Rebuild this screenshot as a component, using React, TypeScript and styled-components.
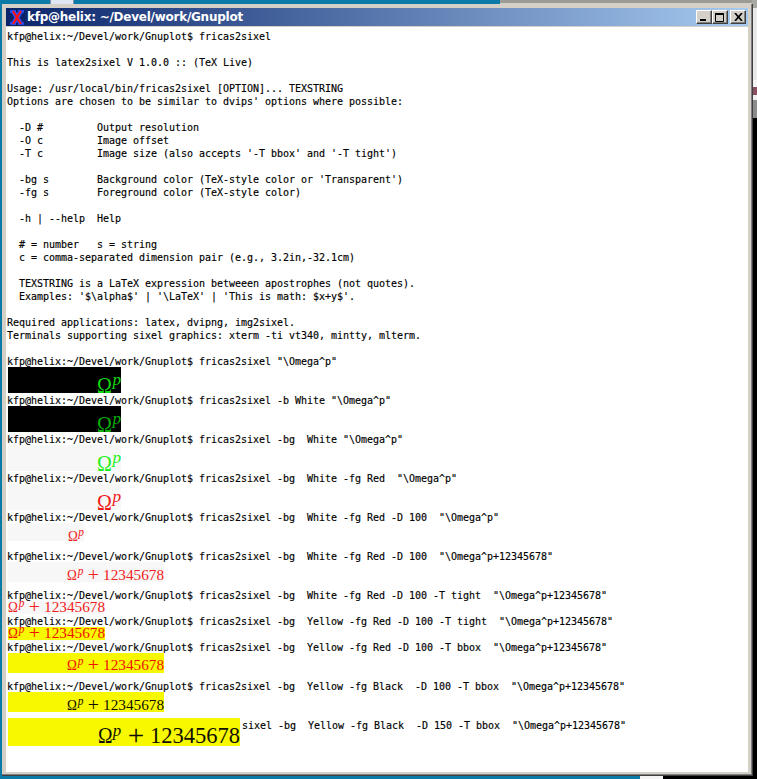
import React from "react";
import styled, { createGlobalStyle } from "styled-components";

const Global = createGlobalStyle`
  html, body { margin: 0; padding: 0; background: #0a7aa6; }
  #root { width: 757px; height: 779px; overflow: hidden; }
`;

const Desktop = styled.div`
  position: relative;
  width: 757px;
  height: 779px;
  overflow: hidden;
  background: #0a7aa6;
`;

const BehindTop = styled.div`
  position: absolute;
  left: 500px;
  top: 0;
  width: 257px;
  height: 8px;
  background: linear-gradient(#9c9c96 0 3px, #d4d0c8 3px);
`;

const ToolbarBit = styled.div`
  position: absolute;
  left: 50px;
  top: 0;
  width: 22px;
  height: 4px;
  background: #dfe6f2;
  border-left: 1px solid #8a94a8;
  border-right: 1px solid #8a94a8;
`;

const BehindRight = styled.div`
  position: absolute;
  left: 752px;
  top: 0;
  width: 5px;
  height: 779px;
  background: linear-gradient(
    #a8a8a2 0 8px,
    #e8e8e8 8px 80px,
    #f4f4f4 80px 87px,
    #8a5060 87px 95px,
    #f0f0f0 95px 100px,
    #8c8c8c 100px 118px,
    #000 118px
  );
`;

const BehindBottom = styled.div`
  position: absolute;
  left: 640px;
  top: 776px;
  width: 117px;
  height: 3px;
  background: linear-gradient(90deg, #f4f4f4 0 23px, #000 23px);
`;

const TermWindow = styled.div`
  position: absolute;
  left: 2px;
  top: 4px;
  width: 751px;
  height: 772px;
  box-sizing: border-box;
  padding: 4px 4px 3px 4px;
  display: flex;
  flex-direction: column;
  background: #d4d0c8;
  border-right: 1px solid #404040;
  border-bottom: 1px solid #404040;
  box-shadow: inset -1px -1px 0 #808080;
`;

const TitleBar = styled.div`
  flex: none;
  height: 18px;
  display: flex;
  align-items: center;
  padding: 0 2px 0 3px;
  gap: 2px;
  background: linear-gradient(90deg, #0a246a, #a6caf0);
`;

const TitleText = styled.span`
  flex: 1;
  color: #fff;
  font: bold 12px/16px "DejaVu Sans", sans-serif;
  letter-spacing: -0.25px;
  white-space: pre;
`;

const Controls = styled.div`
  display: flex;
  align-items: center;
`;

const WinButton = styled.div<{ $gap?: number }>`
  width: 16px;
  height: 14px;
  box-sizing: border-box;
  margin-left: ${(p) => p.$gap ?? 0}px;
  background: #d4d0c8;
  border-top: 1px solid #fff;
  border-left: 1px solid #fff;
  border-right: 1px solid #404040;
  border-bottom: 1px solid #404040;
  box-shadow: inset -1px -1px 0 #808080;
  display: flex;
  align-items: center;
  justify-content: center;
`;

const Screen = styled.div`
  flex: 1;
  margin-top: 1px;
  padding: 2px 0 0 1px;
  background: #fff;
  color: #000;
  font: 10px/15px "DejaVu Sans Mono", monospace;
  letter-spacing: -0.02px;
  -webkit-text-stroke: 0.15px #000;
  overflow: hidden;
`;

const Row = styled.div`
  height: 13px;
  white-space: pre;
`;

const Sixel = styled.div<{ $w: number; $h: number; $bg: string; $fg: string; $size: number; $after?: number }>`
  flex: none;
  width: ${(p) => p.$w}px;
  height: ${(p) => p.$h}px;
  margin: 0 0 ${(p) => p.$after ?? 0}px 1px;
  display: flex;
  justify-content: flex-end;
  align-items: flex-end;
  background: ${(p) => p.$bg};
  color: ${(p) => p.$fg};
  -webkit-text-stroke: 0;
  font-family: "Liberation Serif", serif;
  font-size: ${(p) => p.$size}px;
  line-height: 1;
  letter-spacing: 0;
  white-space: pre;
`;

const LastRow = styled.div`
  display: flex;
  white-space: pre;
`;

const LastText = styled.span`
  margin-left: 2px;
  line-height: 15px;
  height: 13px;
`;

const Formula = styled.span<{ $lift: number }>`
  margin-bottom: calc(${(p) => p.$lift}px - 0.16em);
`;

const Omega = styled.span`
  display: inline-block;
  transform: scaleX(0.87);
  transform-origin: left bottom;
  margin-right: -0.09em;
`;

const Sup = styled.i`
  font-size: 0.75em;
  position: relative;
  top: -0.45em;
  margin-left: 0.03em;
`;

const Plus = styled.span`
  font-size: 1.3em;
  line-height: 0;
  margin: 0 0.2em 0 0.22em;
  position: relative;
  top: 0.06em;
`;

const Math: React.FC<{ plus?: boolean; lift: number }> = ({ plus, lift }) => (
  <Formula $lift={lift}>
    <Omega>Ω</Omega>
    <Sup>p</Sup>
    {plus && (
      <>
        <Plus>+</Plus>12345678
      </>
    )}
  </Formula>
);

const XIcon = () => (
  <svg width="16" height="15" viewBox="0 0 16 15">
    <rect width="16" height="15" fill="#0a246a" />
    <path d="M1 1.5h6M9 1.5h6M1 13.5h6M9 13.5h6" stroke="#2a50ff" strokeWidth="2.4" />
    <path d="M4 1l8 13M12 1L4 14" stroke="#2a50ff" strokeWidth="4.4" />
    <path d="M4 1l8 13M12 1L4 14" stroke="#ff1010" strokeWidth="2.2" />
  </svg>
);

const P = "kfp@helix:~/Devel/work/Gnuplot$ fricas2sixel";

const head = [
  P,
  "",
  "This is latex2sixel V 1.0.0 :: (TeX Live)",
  "",
  "Usage: /usr/local/bin/fricas2sixel [OPTION]... TEXSTRING",
  "Options are chosen to be similar to dvips' options where possible:",
  "",
  "  -D #         Output resolution",
  "  -O c         Image offset",
  "  -T c         Image size (also accepts '-T bbox' and '-T tight')",
  "",
  "  -bg s        Background color (TeX-style color or 'Transparent')",
  "  -fg s        Foreground color (TeX-style color)",
  "",
  "  -h | --help  Help",
  "",
  "  # = number   s = string",
  "  c = comma-separated dimension pair (e.g., 3.2in,-32.1cm)",
  "",
  "  TEXSTRING is a LaTeX expression betweeen apostrophes (not quotes).",
  "  Examples: '$\\alpha$' | '\\LaTeX' | 'This is math: $x+y$'.",
  "",
  "Required applications: latex, dvipng, img2sixel.",
  "Terminals supporting sixel graphics: xterm -ti vt340, mintty, mlterm.",
  "",
];

const runs: { cmd: string; w: number; h: number; bg: string; fg: string; size: number; lift: number; plus?: boolean; after?: number }[] = [
  { cmd: ' "\\Omega^p"', w: 113, h: 26, bg: "#000", fg: "#10d810", size: 23, lift: 0 },
  { cmd: ' -b White "\\Omega^p"', w: 113, h: 26, bg: "#000", fg: "#08b008", size: 23, lift: 0 },
  { cmd: ' -bg  White "\\Omega^p"', w: 113, h: 26, bg: "#f7f7f7", fg: "#20f020", size: 23, lift: 0 },
  { cmd: ' -bg  White -fg Red  "\\Omega^p"', w: 113, h: 26, bg: "#f7f7f7", fg: "#f01818", size: 23, lift: 0 },
  { cmd: ' -bg  White -fg Red -D 100  "\\Omega^p"', w: 76, h: 18, bg: "#f7f7f7", fg: "#f02020", size: 15.25, lift: 0, after: 8 },
  { cmd: ' -bg  White -fg Red -D 100  "\\Omega^p+12345678"', w: 156, h: 20, bg: "#f7f7f7", fg: "#f02020", size: 15.25, lift: 2, plus: true, after: 6 },
  { cmd: ' -bg  White -fg Red -D 100 -T tight  "\\Omega^p+12345678"', w: 97, h: 13, bg: "#f7f7f7", fg: "#f02020", size: 15.25, lift: 2, plus: true },
  { cmd: ' -bg  Yellow -fg Red -D 100 -T tight  "\\Omega^p+12345678"', w: 97, h: 13, bg: "#f8f800", fg: "#f01000", size: 15.25, lift: 2, plus: true },
  { cmd: ' -bg  Yellow -fg Red -D 100 -T bbox  "\\Omega^p+12345678"', w: 156, h: 20, bg: "#f8f800", fg: "#f01000", size: 15.25, lift: 3, plus: true, after: 6 },
  { cmd: ' -bg  Yellow -fg Black  -D 100 -T bbox  "\\Omega^p+12345678"', w: 156, h: 20, bg: "#f8f800", fg: "#101000", size: 15.25, lift: 2, plus: true, after: 6 },
];

export default function App() {
  return (
    <Desktop>
      <Global />
      <BehindTop />
      <ToolbarBit />
      <BehindRight />
      <BehindBottom />
      <TermWindow>
        <TitleBar>
          <XIcon />
          <TitleText>kfp@helix: ~/Devel/work/Gnuplot</TitleText>
          <Controls>
            <WinButton>
              <svg width="8" height="8" viewBox="0 0 8 8">
                <rect x="0" y="6" width="6" height="2" fill="#000" />
              </svg>
            </WinButton>
            <WinButton>
              <svg width="10" height="9" viewBox="0 0 10 9">
                <path d="M0.5 1.5h8v7h-8z" fill="none" stroke="#000" />
                <rect x="0" y="0" width="9" height="2" fill="#000" />
              </svg>
            </WinButton>
            <WinButton $gap={2}>
              <svg width="9" height="8" viewBox="0 0 9 8">
                <path d="M1 0l7 8M8 0L1 8" stroke="#000" strokeWidth="1.7" fill="none" />
              </svg>
            </WinButton>
          </Controls>
        </TitleBar>
        <Screen>
          {head.map((l, i) => (
            <Row key={i}>{l}</Row>
          ))}
          {runs.map((r, i) => (
            <React.Fragment key={i}>
              <Row>{P + r.cmd}</Row>
              <Sixel $w={r.w} $h={r.h} $bg={r.bg} $fg={r.fg} $size={r.size} $after={r.after}>
                <Math plus={r.plus} lift={r.lift} />
              </Sixel>
            </React.Fragment>
          ))}
          <LastRow>
            <Sixel $w={232} $h={28} $bg="#f8f800" $fg="#101000" $size={22.5}>
              <Math plus lift={2} />
            </Sixel>
            <LastText>{'sixel -bg  Yellow -fg Black  -D 150 -T bbox  "\\Omega^p+12345678"'}</LastText>
          </LastRow>
        </Screen>
      </TermWindow>
    </Desktop>
  );
}
